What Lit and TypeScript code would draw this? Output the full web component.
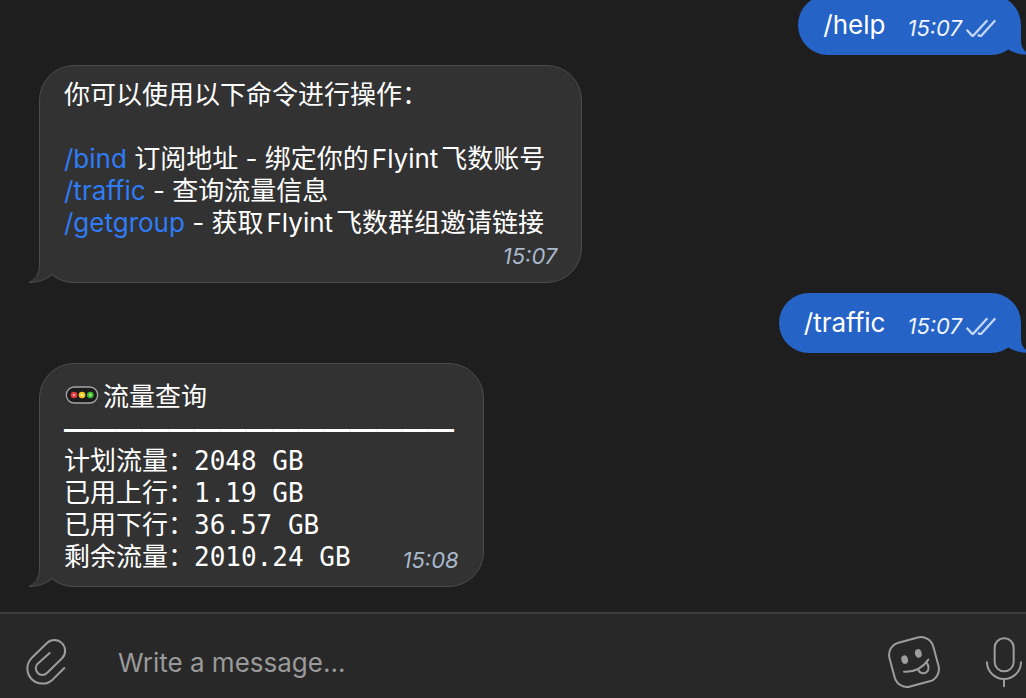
import { LitElement, html, css, svg } from "lit";
import { customElement, property } from "lit/decorators.js";

@customElement("chat-bubble")
export class ChatBubble extends LitElement {
  @property({ type: Boolean, reflect: true }) outgoing = false;

  static styles = css`
    :host {
      display: block;
      position: relative;
      isolation: isolate;
      flex: none;
      box-sizing: border-box;
      align-self: flex-start;
      max-width: 85%;
      margin-left: 39px;
      padding: 13px 24px;
      border: 1px solid #4b4b4e;
      border-radius: 35px;
      background: #323232;
      color: #fff;
    }
    :host([outgoing]) {
      align-self: flex-end;
      margin: 0 5px 0 0;
      padding: 14px 25px;
      border: 0;
      background: #2563c7;
    }
    .tail {
      position: absolute;
      z-index: -1;
      left: -13px;
      bottom: -1px;
      width: 48px;
      height: 40px;
    }
    .tail.out {
      left: auto;
      right: -12px;
      bottom: 0;
    }
    .fill {
      fill: #323232;
    }
    .edge {
      fill: none;
      stroke: #4b4b4e;
    }
    .blue {
      fill: #2563c7;
    }
  `;

  render() {
    return html`
      ${this.outgoing
        ? html`<svg class="tail out" viewBox="0 0 48 40" aria-hidden="true">
            <path class="blue" d="M8 10H36V26C36 33 40 38 47 40C37 40 28 38 23 34L18 37Z" />
          </svg>`
        : html`<svg class="tail" viewBox="0 0 48 40" aria-hidden="true">
            <path class="fill" d="M12.5 0V22C12.5 30 9 36 2 39.5C11 39.5 19 37 25 31.5C31 36.5 38 39.5 48 39.5V0Z" />
            <path class="edge" d="M12.5 0V22C12.5 30 9 36 2 39.5C11 39.5 19 37 25 31.5C31 36.5 38 39.5 48 39.5" />
          </svg>`}
      <slot></slot>
    `;
  }
}

const ticks = svg`<path d="M590 86L608 106L652 58M624 101L631 107L676 58" />`;

@customElement("app-root")
export class AppRoot extends LitElement {
  static styles = css`
    :host {
      display: flex;
      flex-direction: column;
      height: 100vh;
      overflow: hidden;
      background: #1e1e1e;
      font: 26px/32px Inter, "Noto Sans CJK SC", sans-serif;
    }
    .thread {
      flex: 1;
      min-height: 0;
      display: flex;
      flex-direction: column;
      justify-content: flex-end;
      gap: 10px;
      padding-bottom: 25px;
      overflow: hidden;
    }
    .row {
      display: flex;
      align-items: baseline;
      gap: 22px;
    }
    .last {
      justify-content: space-between;
      gap: 52px;
    }
    .cmd {
      color: #2f7cf6;
      text-decoration: none;
    }
    .sent {
      color: #fff;
      text-decoration: none;
    }
    .help {
      margin: 0;
      padding-right: 12px;
      white-space: pre-line;
    }
    .brand {
      padding: 0 3px;
    }
    .time {
      position: relative;
      top: 2px;
      display: flex;
      align-items: center;
      gap: 4px;
      font-size: 22px;
      font-style: italic;
      line-height: 30px;
      color: #a9b8cb;
    }
    .own {
      justify-content: flex-end;
    }
    .out {
      color: #f0f5ff;
    }
    .row .time {
      line-height: 28px;
    }
    .ticks {
      width: 30px;
      height: 18px;
      fill: none;
      stroke: #c2d6f6;
      stroke-width: 7;
    }
    .title {
      display: flex;
      align-items: center;
      gap: 4px;
      padding-top: 4px;
    }
    .light {
      width: 34px;
      height: 18px;
      margin: 0 0 4px 1px;
    }
    .rule {
      font-family: "Noto Sans CJK SC", sans-serif;
      white-space: nowrap;
    }
    .stat {
      font-family: "DejaVu Sans Mono", "Noto Sans CJK SC", monospace;
      white-space: pre;
    }
    .composer {
      flex: none;
      display: flex;
      align-items: center;
      padding: 12px 3px 0 24px;
      height: 72px;
      border-top: 2px solid #3d3d3d;
      background: #282828;
    }
    .tool {
      flex: none;
      display: block;
      margin: 0;
      padding: 0;
      border: 0;
      background: none;
      color: #9d9d9d;
      cursor: pointer;
    }
    .icon {
      display: block;
      height: 52px;
      fill: none;
      stroke: currentColor;
      stroke-width: 6;
      stroke-linecap: round;
      stroke-linejoin: round;
    }
    .clip {
      width: 44px;
    }
    .sticker {
      width: 54px;
    }
    .mic {
      width: 38px;
      margin-left: 44px;
    }
    .eye {
      fill: currentColor;
      stroke: none;
    }
    .entry {
      flex: 1;
      min-width: 0;
      margin: 2px 0 0 50px;
      padding: 0;
      border: 0;
      outline: 0;
      background: none;
      color: #fff;
      font: 26px/32px Inter, "Noto Sans CJK SC", sans-serif;
    }
    .entry::placeholder {
      color: #9a9a9a;
      opacity: 1;
    }
  `;

  private sent(text: string, time: string) {
    return html`<chat-bubble outgoing>
      <div class="row">
        <a class="sent" href="#">${text}</a>
        <span class="time out">
          <time>${time}</time>
          <svg class="ticks" viewBox="588 54 90 54" aria-label="Read">${ticks}</svg>
        </span>
      </div>
    </chat-bubble>`;
  }

  render() {
    return html`
      <main class="thread">
        ${this.sent("/help", "15:07")}
        <chat-bubble>
          <p class="help">你可以使用以下命令进行操作：

<a class="cmd" href="#">/bind</a> 订阅地址 - 绑定你的<span class="brand">Flyint</span>飞数账号
<a class="cmd" href="#">/traffic</a> - 查询流量信息
<a class="cmd" href="#">/getgroup</a> - 获取<span class="brand">Flyint</span>飞数群组邀请链接</p>
          <span class="time own"><time>15:07</time></span>
        </chat-bubble>
        ${this.sent("/traffic", "15:07")}
        <chat-bubble>
          <div class="title">
            <svg class="light" viewBox="136 107 102 54" role="img" aria-label="Traffic light">
              <rect x="140" y="110" width="94" height="48" rx="24" fill="#1c1c1c" stroke="#a4a4a4" stroke-width="4" />
              <circle cx="163" cy="134" r="10" fill="#e0383e" />
              <circle cx="187" cy="134" r="10" fill="#f6c51c" />
              <circle cx="212" cy="134" r="10" fill="#3cba2c" />
              <circle cx="163" cy="134" r="4" fill="#ff9c98" />
              <circle cx="187" cy="134" r="4" fill="#fff2a0" />
              <circle cx="212" cy="134" r="4" fill="#a4f286" />
            </svg>
            <span>流量查询</span>
          </div>
          <div class="rule">━━━━━━━━━━━━━━━</div>
          <div class="stat">计划流量：2048 GB</div>
          <div class="stat">已用上行：1.19 GB</div>
          <div class="stat">已用下行：36.57 GB</div>
          <div class="row last">
            <span class="stat">剩余流量：2010.24 GB</span>
            <span class="time"><time>15:08</time></span>
          </div>
        </chat-bubble>
      </main>
      <form class="composer" @submit=${(e: Event) => e.preventDefault()}>
        <button class="tool" type="button" aria-label="Attach file">
          <svg class="icon clip" viewBox="72 108 132 156">
            <path d="M193 204L158 239A45.3 45.3 0 0 1 94 175L141 129A32.2 32.2 0 0 1 187 174L141 219A19.8 19.8 0 0 1 113 191L149 159" />
          </svg>
        </button>
        <input class="entry" type="text" placeholder="Write a message..." aria-label="Write a message" />
        <button class="tool" type="button" aria-label="Stickers">
          <svg class="icon sticker" viewBox="51 108 162 156">
            <rect x="64" y="118" width="136" height="136" rx="38" transform="rotate(-15 132 186)" />
            <ellipse class="eye" cx="104" cy="179" rx="10" ry="13" transform="rotate(-15 104 179)" />
            <ellipse class="eye" cx="145" cy="160" rx="10" ry="13" transform="rotate(-15 145 160)" />
            <path d="M102 215C132 217 157 205 175 179" />
            <path d="M144 208C148 222 165 223 172 214C178 206 176 197 170 188" />
          </svg>
        </button>
        <button class="tool" type="button" aria-label="Record voice message">
          <svg class="icon mic" viewBox="345 108 114 156">
            <rect x="374" y="115" width="57" height="99" rx="28" />
            <path d="M351 187C351 214 374 237 402 237S453 214 453 187M402 237V259" />
          </svg>
        </button>
      </form>
    `;
  }
}
